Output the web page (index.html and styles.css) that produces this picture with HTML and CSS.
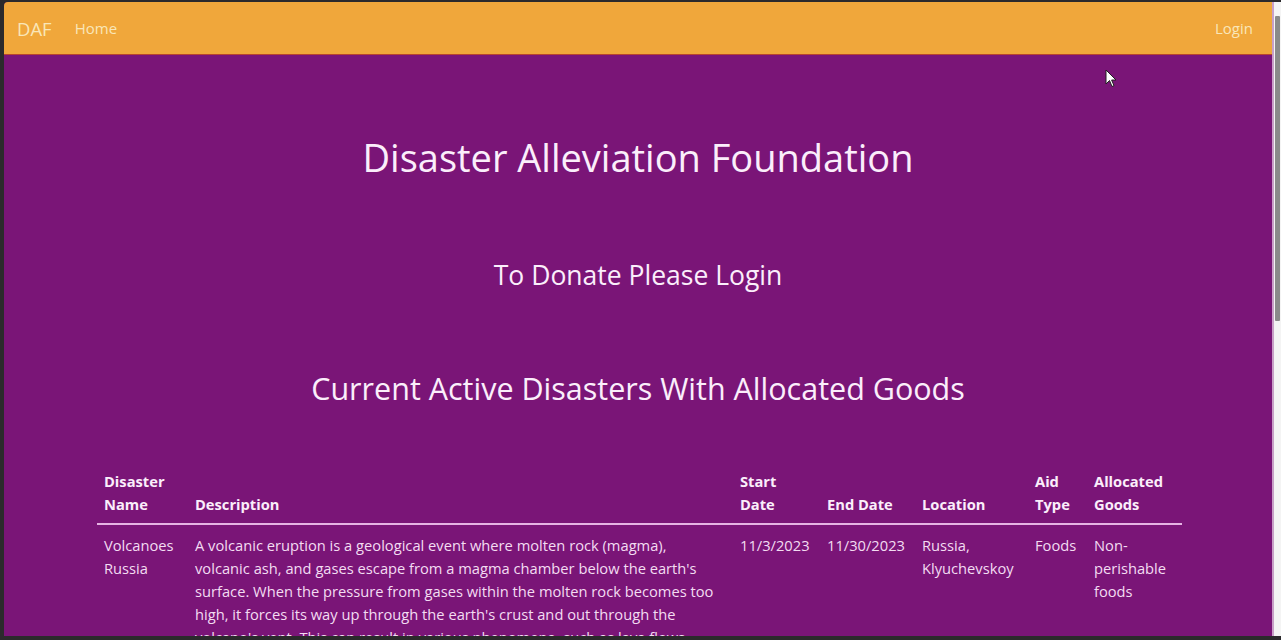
FILE: index.html
```html
<!DOCTYPE html>
<html lang="en">
<head>
<meta charset="utf-8">
<title>Disaster Alleviation Foundation</title>
<link rel="stylesheet" href="styles.css">
</head>
<body>
<div class="frame">
  <div class="viewport">
    <nav class="navbar">
      <a class="brand" href="#">DAF</a>
      <a class="nav-link" href="#">Home</a>
      <span class="spacer"></span>
      <a class="nav-link" href="#">Login</a>
    </nav>
    <main class="content">
      <h1 class="title">Disaster Alleviation Foundation</h1>
      <h2 class="subtitle">To Donate Please Login</h2>
      <h2 class="section-title">Current Active Disasters With Allocated Goods</h2>
      <table class="disasters">
        <colgroup>
          <col class="c-name"><col class="c-desc"><col class="c-start"><col class="c-end"><col class="c-loc"><col class="c-aid"><col class="c-goods">
        </colgroup>
        <thead>
          <tr>
            <th>Disaster Name</th>
            <th>Description</th>
            <th>Start Date</th>
            <th>End Date</th>
            <th>Location</th>
            <th>Aid Type</th>
            <th>Allocated Goods</th>
          </tr>
        </thead>
        <tbody>
          <tr>
            <td>Volcanoes Russia</td>
            <td class="desc">A volcanic eruption is a geological event where molten rock (magma), volcanic ash, and gases escape from a magma chamber below the earth's surface. When the pressure from gases within the molten rock becomes too high, it forces its way up through the earth's crust and out through the volcano's vent. This can result in various phenomena, such as lava flows, ash clouds, and pyroclastic flows.</td>
            <td>11/3/2023</td>
            <td>11/30/2023</td>
            <td>Russia, Klyuchevskoy</td>
            <td>Foods</td>
            <td>Non-perishable foods</td>
          </tr>
        </tbody>
      </table>
    </main>
    <svg class="cursor" width="12" height="19" viewBox="0 0 12 19"><path d="M1 1 L1 15 L4.5 11.5 L7 17.5 L9 16.6 L6.6 11 L11 11 Z" fill="#fff" stroke="#222" stroke-width="1"/></svg>
  </div>
  <div class="scrollbar"><div class="thumb"></div></div>
</div>
</body>
</html>
```
FILE: styles.css
```css
* { box-sizing: border-box; }
html, body { margin: 0; padding: 0; height: 100%; }
body {
  background: #2b2a2c;
  font-family: "Open Sans", "Noto Sans", sans-serif;
  overflow: hidden;
}
.frame {
  display: flex;
  height: 640px;
  padding: 2px 0 4px 4px;
}
.viewport {
  position: relative;
  flex: 1;
  background: #7a1577;
  overflow: hidden;
  border-top-left-radius: 4px;
}
.scrollbar {
  width: 9px;
  background: #f4f4f4;
  border-left: 2px solid #c9a0c8;
  padding: 14px 1px 0 1px;
}
.thumb {
  height: 305px;
  background: #8a8a8a;
  border-radius: 1px;
}
.navbar {
  display: flex;
  align-items: center;
  height: 53px;
  background: #f0a73b;
  border-bottom: 1px solid #b8452e;
  padding: 0 19px 0 13px;
}
.navbar a { text-decoration: none; color: #f9e6b8; }
.brand { font-size: 18.5px; margin-right: 23px; }
.nav-link { font-size: 15px; }
.spacer { flex: 1; }
.content {
  color: #fbeefb;
  text-align: center;
  padding: 0 90px;
}
.title {
  font-weight: 400;
  font-size: 38px;
  margin: 79px 0 0;
  line-height: 46px;
}
.subtitle {
  font-weight: 400;
  font-size: 26.5px;
  margin: 79px 0 0;
  line-height: 32px;
}
.section-title {
  font-weight: 400;
  font-size: 30.5px;
  margin: 77px 0 0;
  line-height: 40px;
}
.disasters {
  margin: 54px 0 0 3px;
  width: 1085px;
  table-layout: fixed;
  border-collapse: collapse;
  text-align: left;
  font-size: 14.7px;
  line-height: 23px;
  color: #f3dcf2;
}
.c-name { width: 91px; }
.c-desc { width: 545px; }
.c-start { width: 87px; }
.c-end { width: 95px; }
.c-loc { width: 113px; }
.c-aid { width: 59px; }
.c-goods { width: 95px; }
.disasters th {
  font-weight: 700;
  vertical-align: bottom;
  padding: 8px 7px 7px;
  color: #fbeefb;
  border-bottom: 2px solid #e6b4e4;
}
.disasters td {
  vertical-align: top;
  padding: 9px 7px;
}
.disasters td.desc { padding-right: 18px; }
.cursor {
  position: absolute;
  left: 1101px;
  top: 67px;
}
```
